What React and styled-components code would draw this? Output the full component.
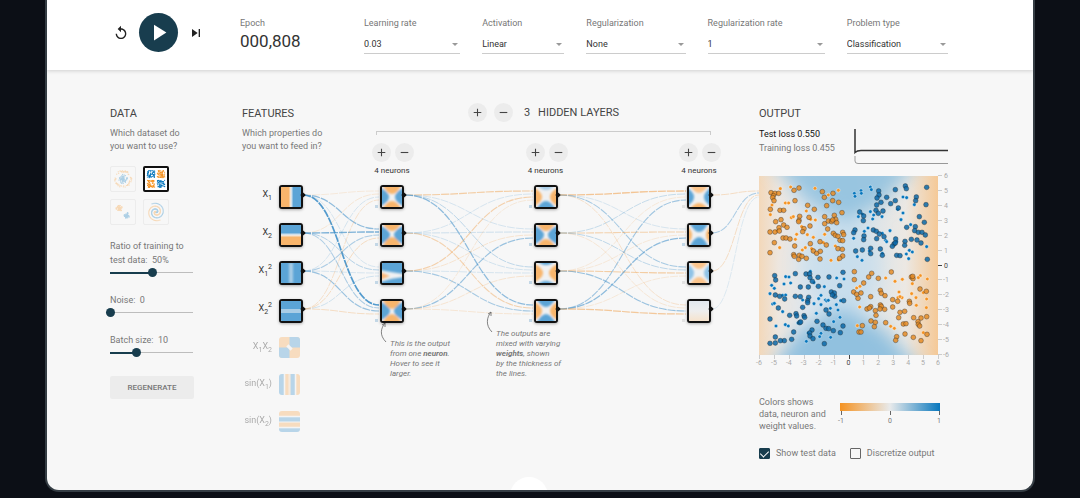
import React, { useState } from "react";
import styled, { createGlobalStyle } from "styled-components";
import { MdReplay, MdPlayArrow, MdSkipNext, MdAdd, MdRemove } from "react-icons/md";

const GlobalStyle = createGlobalStyle`
  * { box-sizing: border-box; }
  body {
    margin: 0;
    background: #0c0f16;
    color: #777;
    font: 9px/13px Roboto, "Liberation Sans", sans-serif;
  }
  button, select, input { font: inherit; color: inherit; margin: 0; }
`;

const BLUE = "#0877bd";
const ORANGE = "#f59322";

/* ---------- page shell ---------- */

const Frame = styled.div`
  margin: 0 45px 6px;
  border: 2px solid #353d44;
  border-top: 0;
  border-radius: 0 0 14px 14px;
  background: #f7f7f7;
  overflow: hidden;
`;

const Header = styled.header`
  display: flex;
  height: 70px;
  padding: 0 85px 0 63px;
  background: #fff;
  box-shadow: 0 1px 4px rgba(0, 0, 0, 0.16);
`;

const Main = styled.main`
  display: grid;
  grid-template-columns: 84px 1fr 190px;
  padding: 33px 84px 17px 63px;
`;

const Footer = styled.footer`
  display: flex;
  justify-content: center;
  height: 13px;
  padding: 0 85px 0 63px;
  overflow: hidden;
`;

const MoreButton = styled.button`
  width: 38px;
  height: 38px;
  border: 0;
  border-radius: 50%;
  background: #fff;
`;

/* ---------- header parts ---------- */

const Controls = styled.div`
  display: flex;
  align-items: center;
  flex: none;
  width: 130px;
  height: 65px;
  padding-left: 3px;
  gap: 10px;
`;

const IconButton = styled.button`
  display: grid;
  place-items: center;
  width: 16px;
  height: 16px;
  padding: 0;
  border: 0;
  background: none;
  color: #222;
  font-size: ${(p) => p.$size}px;
`;

const PlayButton = styled(IconButton)`
  width: 39px;
  height: 39px;
  border-radius: 50%;
  background: #183d4e;
  color: #fff;
`;

const Epoch = styled.div`
  flex: none;
  width: 124px;
  padding-top: 17px;
`;

const EpochValue = styled.output`
  display: block;
  font-size: 17px;
  line-height: 22px;
  color: #333;
`;

const Fields = styled.div`
  display: flex;
  flex: 1;
  gap: 22px;
  padding-top: 17px;
`;

const Field = styled.label`
  position: relative;
  display: block;
  flex: ${(p) => p.$grow} 1 0;
  min-width: 0;
  &::after {
    content: "";
    position: absolute;
    right: 2px;
    top: 26px;
    border: 3px solid transparent;
    border-top-color: #999;
    border-bottom: 0;
    pointer-events: none;
  }
`;

const Select = styled.select`
  display: block;
  width: 100%;
  height: 20px;
  margin-top: 4px;
  padding: 2px 0 0;
  border: 0;
  border-bottom: 1px solid #ccc;
  border-radius: 0;
  background: none;
  color: #333;
  appearance: none;
`;

function Dropdown({ label, options, grow }) {
  return (
    <Field $grow={grow}>
      {label}
      <Select defaultValue={options[0]}>
        {options.map((o) => (
          <option key={o}>{o}</option>
        ))}
      </Select>
    </Field>
  );
}

/* ---------- shared text ---------- */

const Title = styled.h2`
  margin: 0;
  font-size: 11px;
  line-height: 22px;
  font-weight: 400;
  color: #444;
`;

const Hint = styled.p`
  width: 84px;
  margin: 2px 0 0;
`;

/* ---------- data column ---------- */

const Datasets = styled.div`
  display: grid;
  grid-template-columns: 26px 26px;
  gap: 7px;
  margin: 13px 0 14px;
`;

const Dataset = styled.button`
  display: block;
  width: 26px;
  height: 26px;
  padding: 1px;
  border: ${(p) => (p.$active ? "2px solid #111" : "1px solid #ececec")};
  border-radius: 2px;
  background: ${(p) => (p.$active ? "#fff" : "none")};
  svg { display: block; width: 100%; height: 100%; opacity: ${(p) => (p.$active ? 1 : 0.3)}; }
`;

const SliderLabel = styled.label`
  display: block;
  height: ${(p) => (p.$tall ? 42 : 27)}px;
  margin-bottom: ${(p) => p.$after}px;
  line-height: 14px;
`;

const Range = styled.input`
  display: block;
  width: calc(100% + 8px);
  height: 9px;
  margin: 1px -4px 0;
  background: none;
  appearance: none;
  &::-webkit-slider-runnable-track {
    height: 9px;
    background:
      linear-gradient(#183d4e, #183d4e) 4px 4px / calc((100% - 9px) * ${(p) => p.$fill}) 2px no-repeat,
      linear-gradient(#bdbdbd, #bdbdbd) 4px 4px / calc(100% - 9px) 1px no-repeat;
  }
  &::-webkit-slider-thumb {
    width: 9px;
    height: 9px;
    border-radius: 50%;
    background: #183d4e;
    appearance: none;
  }
`;

const Regenerate = styled.button`
  display: block;
  width: 100%;
  height: 23px;
  padding: 0;
  border: 0;
  border-radius: 2px;
  background: #ececec;
  color: #777;
  font-size: 8px;
  font-weight: 500;
`;

function Slider({ label, unit = "", min, max, initial, tall, after }) {
  const [value, setValue] = useState(initial);
  return (
    <SliderLabel $tall={tall} $after={after}>
      {label}&nbsp; {value}{unit}
      <Range
        type="range"
        min={min}
        max={max}
        value={value}
        $fill={(value - min) / (max - min)}
        onChange={(e) => setValue(+e.target.value)}
      />
    </SliderLabel>
  );
}

const noise = (n) => {
  const v = Math.sin(n * 127.1 + 11.7) * 43758.5453;
  return v - Math.floor(v);
};
const range = (n) => Array.from({ length: n }, (_, i) => i);

const datasetDots = {
  circle: [
    ...range(80).map((i) => {
      const a = noise(i) * 6.28, r = noise(i + 90) * 5;
      return [12 + r * Math.cos(a), 12 + r * Math.sin(a), BLUE];
    }),
    ...range(60).map((i) => {
      const a = noise(i + 200) * 6.28, r = 7.5 + noise(i + 300) * 2;
      return [12 + r * Math.cos(a), 12 + r * Math.sin(a), ORANGE];
    }),
  ],
  xor: range(260).map((i) => {
    const x = noise(i + 5) * 9, y = noise(i + 400) * 9, q = i % 4;
    return [(q % 2 ? 13.5 : 1.5) + x, (q > 1 ? 13.5 : 1.5) + y, q === 0 || q === 3 ? BLUE : ORANGE];
  }),
  gauss: range(120).map((i) => {
    const a = noise(i + 7) * 6.28, r = noise(i + 60) * 3.5, o = i % 2;
    return [(o ? 8 : 16) + r * Math.cos(a), (o ? 8 : 16) + r * Math.sin(a), o ? ORANGE : BLUE];
  }),
  spiral: range(160).map((i) => {
    const t = (i >> 1) / 80, a = t * 10 + (i % 2 ? Math.PI : 0);
    return [12 + 10 * t * Math.sin(a), 12 + 10 * t * Math.cos(a), i % 2 ? ORANGE : BLUE];
  }),
};

function DatasetThumb({ kind, active }) {
  return (
    <Dataset $active={active} aria-label={kind} aria-pressed={!!active}>
      <svg viewBox="0 0 24 24">
        {datasetDots[kind].map(([x, y, c], i) => (
          <rect key={i} x={x - 0.6} y={y - 0.6} width="1.2" height="1.2" fill={c} />
        ))}
      </svg>
    </Dataset>
  );
}

/* ---------- network ---------- */

const Network = styled.section`
  position: relative;
  display: flex;
  padding: 0 38px 0 48px;
`;

const Links = styled.svg`
  position: absolute;
  left: 48px;
  top: 0;
  width: calc(100% - 48px);
  height: 340px;
  overflow: visible;
  pointer-events: none;
`;

const FeatureColumn = styled.div`
  flex: none;
  width: 82px;
  margin-right: 48px;
`;

const FeatureList = styled.div`
  position: relative;
  display: grid;
  gap: 14px;
  margin-top: 32px;
`;

const FeatureRow = styled.div`
  display: flex;
  justify-content: flex-end;
  gap: 7px;
  height: ${(p) => (p.$active ? 24 : 23)}px;
  padding-right: ${(p) => (p.$active ? 21 : 24)}px;
  opacity: ${(p) => (p.$active ? 1 : 0.4)};
`;

const FeatureName = styled.span`
  font-size: 9px;
  line-height: 18px;
  color: #333;
  white-space: nowrap;
  sub, sup { font-size: 7px; line-height: 0; }
`;

const Box = styled.button`
  position: relative;
  display: block;
  flex: none;
  width: ${(p) => (p.$plain ? 21 : 24)}px;
  height: ${(p) => (p.$plain ? 21 : 24)}px;
  padding: 0;
  border: ${(p) => (p.$plain ? "0" : "2px solid #111")};
  border-radius: 3px;
  background: #eee;
  box-shadow: ${(p) => (p.$plain ? "none" : "0 1px 3px rgba(0, 0, 0, 0.3)")};
  svg { display: block; width: 100%; height: 100%; border-radius: ${(p) => (p.$plain ? 3 : 1)}px; }
  &::after {
    content: "";
    display: ${(p) => (p.$plain ? "none" : "block")};
    position: absolute;
    right: -4px;
    top: 6px;
    width: 4px;
    height: 4px;
    border-radius: 1px;
    background: #111;
    transform: rotate(45deg);
  }
  &::before {
    content: "";
    display: ${(p) => (p.$bias ? "block" : "none")};
    position: absolute;
    left: -7px;
    bottom: -1px;
    width: 3px;
    height: 3px;
    background: ${(p) => p.$bias};
  }
`;

const Hidden = styled.div`
  position: relative;
  flex: 1;
`;

const HiddenHead = styled.div`
  display: flex;
  justify-content: center;
  align-items: center;
  gap: 7px;
  height: 19px;
  padding-right: 6px;
`;

const RoundButton = styled.button`
  display: grid;
  place-items: center;
  width: 19px;
  height: 19px;
  padding: 0;
  border: 0;
  border-radius: 50%;
  background: #ececec;
  color: #444;
  font-size: 13px;
`;

const HiddenTitle = styled(Title)`
  display: flex;
  gap: 8px;
  margin-left: 4px;
`;

const Bracket = styled.div`
  height: 4px;
  margin: 9px 10px 8px 4px;
  border: 1px solid #ccc;
  border-bottom: 0;
`;

const Layers = styled.div`
  display: flex;
  justify-content: space-between;
`;

const Layer = styled.div`
  width: 42px;
`;

const LayerButtons = styled.div`
  display: flex;
  justify-content: space-between;
`;

const NeuronCount = styled.div`
  margin: 3px 0 8px;
  padding-right: 2px;
  font-size: 8px;
  line-height: 12px;
  text-align: center;
  color: #333;
`;

const Neurons = styled.div`
  display: grid;
  gap: 14px;
  padding-left: 8px;
`;

const Callouts = styled.div`
  display: flex;
  gap: 44px;
  padding: 6px 0 0 18px;
  font-size: 8px;
  line-height: 10px;
  font-style: italic;
  white-space: nowrap;
  color: #777;
`;

const Callout = styled.p`
  width: ${(p) => p.$width}px;
  margin: 0;
  padding-top: ${(p) => p.$drop}px;
`;

const O = "#f8b56c";
const B = "#5ba4d6";
const W = "#f0f1f2";

const HEAT = {
  x1: <><rect width="20" height="20" fill="url(#gx)" /></>,
  x2: <><rect width="20" height="20" fill="url(#gy)" /></>,
  x1sq: <><rect width="20" height="20" fill={B} /><rect x="8" width="4" height="20" fill="#a9cde6" filter="url(#b1)" /></>,
  x2sq: <><rect width="20" height="20" fill={B} /><rect y="8" width="20" height="4" fill="#a9cde6" /></>,
  x1x2: (
    <>
      <rect width="20" height="20" fill={O} />
      <path d="M10 0H20V10H10zM0 10H10V20H0z" fill={B} />
      <path d="M8 8L12 12" stroke={W} strokeWidth="3" />
    </>
  ),
  sin1: <>{["#5ba4d6", W, O, "#f4d9bb", B, W, O].map((c, i) => <rect key={i} x={[0, 4.5, 6, 9, 11, 15, 16.5][i]} width="5" height="20" fill={c} />)}</>,
  sin2: <>{[O, W, B, W, O, W, B].map((c, i) => <rect key={i} y={[0, 4.5, 6, 10, 11, 15, 16.5][i]} width="20" height="5" fill={c} />)}</>,
  faded: <rect width="20" height="20" fill="url(#gf)" />,
  wedge: (
    <>
      <rect width="20" height="20" fill={B} />
      <path d="M-2 7Q8 9 22 11V14Q10 15 -2 19z" fill={W} filter="url(#b1)" />
      <path d="M-2 9L8 13L-2 17z" fill="#fbb87a" filter="url(#b1)" />
    </>
  ),
};

function saddle(side, top, bottom, [reach, up, down]) {
  return (
    <>
      <rect width="20" height="20" fill={W} />
      <g filter="url(#b1)">
        <path d={`M-3 0Q${reach * 2 + 3} 10 -3 20z`} fill={side} />
        <path d={`M23 0Q${17 - reach * 2} 10 23 20z`} fill={side} />
        <path d={`M0 -3Q10 ${up * 2 + 3} 20 -3z`} fill={top} />
        <path d={`M0 23Q10 ${17 - down * 2} 20 23z`} fill={bottom} />
      </g>
    </>
  );
}

const LAYERS = [
  [saddle(B, O, O, [7, 7, 6]), saddle(B, O, O, [8, 6, 8]), HEAT.wedge, saddle(B, O, O, [8, 8, 7])],
  [saddle(O, "#a8cde8", B, [6, 3, 6]), saddle(B, O, O, [8, 6, 6]), saddle(O, B, B, [7, 2, 2]), saddle(O, B, B, [6, 6, 7])],
  [saddle(B, "#fbc48c", O, [5, 6, 4]), saddle(O, B, B, [3, 7, 8]), saddle("#8fc2e6", "#fbc48c", "#fbc48c", [5, 6, 6]), HEAT.faded],
];

const FEATURES = [
  { name: <>X<sub>1</sub></>, heat: "x1", on: true },
  { name: <>X<sub>2</sub></>, heat: "x2", on: true },
  { name: <>X<sub>1</sub><sup>2</sup></>, heat: "x1sq", on: true },
  { name: <>X<sub>2</sub><sup>2</sup></>, heat: "x2sq", on: true },
  { name: <>X<sub>1</sub>X<sub>2</sub></>, heat: "x1x2" },
  { name: <>sin(X<sub>1</sub>)</>, heat: "sin1" },
  { name: <>sin(X<sub>2</sub>)</>, heat: "sin2" },
];

/* Signed link weights: rows are sources, columns are targets; positive is blue. */
const WEIGHTS = [
  {
    from: 61, to: 137,
    w: [[-0.08, 0.6, 0.08, 1.1], [-0.12, 0.75, 0.3, 0.35], [0.1, 0.35, 0.08, 0.5], [-0.2, -0.25, 0.12, -0.25]],
  },
  {
    from: 163, to: 291,
    w: [[-0.5, 0.1, 0.25, 0.6], [0.08, 0.15, 0.12, -0.4], [-0.45, -0.15, 0.08, 0.4], [-0.1, 0.5, -0.15, -0.12]],
  },
  {
    from: 317, to: 444,
    w: [[-0.65, 0.08, 0.4, -0.2], [0.2, -0.4, 0.25, -0.12], [-0.1, -0.1, -0.5, 0.5], [0.45, 0.6, -0.1, -0.6]],
  },
];

const rowY = (i) => 92 + 38 * i;

function curve(x0, y0, x1, y1) {
  const m = (x0 + x1) / 2;
  return `M${x0} ${y0}C${m} ${y0} ${m} ${y1} ${x1} ${y1}`;
}

function Link({ d, w }) {
  const a = Math.abs(w);
  return (
    <path
      d={d}
      fill="none"
      stroke={w > 0 ? "#3f8fc8" : "#f0a454"}
      strokeOpacity={0.18 + a * 0.65}
      strokeWidth={0.7 + a * 0.9}
      strokeDasharray="8 1"
    />
  );
}

function NetworkLinks() {
  return (
    <Links viewBox="0 0 517 340" preserveAspectRatio="none" aria-hidden="true">
      <defs>
        <filter id="b1" x="-30%" y="-30%" width="160%" height="160%"><feGaussianBlur stdDeviation="1" /></filter>
        <linearGradient id="gx"><stop offset=".38" stopColor={O} /><stop offset=".5" stopColor={W} /><stop offset=".62" stopColor={B} /></linearGradient>
        <linearGradient id="gy" x2="0" y2="1"><stop offset=".38" stopColor={B} /><stop offset=".5" stopColor={W} /><stop offset=".62" stopColor={O} /></linearGradient>
        <linearGradient id="gf" x2="0" y2="1"><stop offset="0" stopColor="#e2e8ee" /><stop offset=".5" stopColor="#eeeeee" /><stop offset="1" stopColor="#f6e3cd" /></linearGradient>
      </defs>
      {WEIGHTS.map(({ from, to, w }, s) =>
        w.map((row, i) =>
          row.map((v, j) => (
            <Link key={`${s}${i}${j}`} w={v} d={curve(from, rowY(i), to, rowY(j) - 4 + i * 3)} />
          ))
        )
      )}
      {[-0.25, 0.35, -0.25, 0.03].map((v, i) => (
        <Link key={i} w={v} d={curve(470, rowY(i), 517, 88 + i * 2)} />
      ))}
      <g fill="none" stroke="#666" strokeWidth=".8">
        <path d="M144 239C137 232 139 225 143 220M140 222L143 220L143 224" />
        <path d="M250 229C243 222 245 214 249 209M246 211L249 209L249 213" />
      </g>
    </Links>
  );
}

function Heat({ children }) {
  return <svg viewBox="0 0 20 20" preserveAspectRatio="none">{children}</svg>;
}

const PlusMinus = ({ what }) => (
  <>
    <RoundButton aria-label={`Add ${what}`}><MdAdd /></RoundButton>
    <RoundButton aria-label={`Remove ${what}`}><MdRemove /></RoundButton>
  </>
);

/* ---------- output ---------- */

const OutputHead = styled.div`
  display: flex;
  justify-content: space-between;
  height: 69px;
`;

const Losses = styled.div`
  margin-top: 2px;
  line-height: 14px;
  white-space: nowrap;
`;

const TestLoss = styled.div`
  color: #111;
`;

const LossChart = styled.svg`
  flex: none;
  width: 96px;
  height: 40px;
  margin-top: 24px;
`;

const Plot = styled.svg`
  display: block;
  width: 210px;
  height: 200px;
  margin: -2px 0 0 -9px;
  font-size: 7px;
`;

const Legend = styled.div`
  display: flex;
  gap: 10px;
  margin-top: 26px;
  line-height: 12px;
`;

const LegendText = styled.p`
  flex: none;
  width: 69px;
  margin: 0;
  white-space: nowrap;
`;

const Scale = styled.div`
  width: 104px;
  margin-top: 7px;
  font-size: 7px;
  line-height: 10px;
`;

const ScaleBar = styled.div`
  width: 100px;
  height: 8px;
  margin-left: 2px;
  background: linear-gradient(90deg, ${ORANGE}, #e8eaeb, ${BLUE});
`;

const ScaleTicks = styled.div`
  display: flex;
  justify-content: space-between;
`;

const Tick = styled.span`
  width: 6px;
  text-align: center;
  &::before {
    content: "";
    display: block;
    width: 1px;
    height: 4px;
    margin: 0 auto 1px;
    background: #666;
  }
`;

const Checks = styled.div`
  display: flex;
  gap: 14px;
  margin-top: 15px;
`;

const Check = styled.label`
  display: flex;
  align-items: center;
  gap: 6px;
  white-space: nowrap;
`;

const CheckBox = styled.input`
  display: grid;
  place-items: center;
  width: 11px;
  height: 11px;
  border: 1px solid #666;
  border-radius: 1px;
  appearance: none;
  &:checked { border-color: #183d4e; background: #183d4e; }
  &:checked::after {
    content: "";
    width: 4px;
    height: 7px;
    margin-top: -2px;
    border: solid #fff;
    border-width: 0 1px 1px 0;
    transform: rotate(45deg);
  }
`;

/* Samples in thirds of a pixel from the plot's corner. */
const parse = (s) => s.trim().split(/\s+/).map((p) => p.split(",").map((n) => n / 3));

const TEST_ORANGE = parse(`
63,68 75,70 86,70 70,77 68,83 72,92 61,118 90,121 101,121 77,155 93,149 60,186 75,186 87,173 88,183 101,165
111,172 73,218 60,248 99,204 108,204 120,207 132,61 147,54 135,92 173,106 193,118 149,139 147,151 177,142
146,155 180,168 162,176 158,185 217,65 223,82 249,70 230,107 248,92 266,97 276,128 253,136 224,140 224,161
235,153 245,155 257,148 260,158 248,150 233,177 250,190 256,196 264,199 278,187 281,194 270,211 278,212
229,225 210,215 181,221 134,228 131,254 133,259 148,256 146,268 156,259 169,265 190,243 200,250 211,244
210,267 264,236 277,238 278,258 269,265 313,305 313,329 341,339 356,321 365,310 385,325 424,306 484,321
489,326 488,319 311,366 320,373 324,385 333,369 362,380 391,361 394,370 405,377 428,389 443,394 478,394
479,400 510,357 529,364 362,410 351,417 358,414 391,405 394,409 390,417 404,418 428,411 376,422 378,436
363,453 376,457 373,470 407,458 327,486 333,486 337,467 446,443 450,427 464,424 460,462 468,461 491,443
513,444 530,440 504,455 505,463 509,468 531,493 465,492 440,500 437,511 490,502 513,512`);

const TRAIN_ORANGE = parse(`
91,56 122,51 195,55 265,61 235,75 66,105 106,99 116,99 61,134 124,143 130,140 169,123 196,150 182,148
155,170 80,183 172,194 190,202 140,193 89,233 136,208 157,240 166,233 224,193 220,218 256,228 265,270
243,271 185,236 320,354 330,349 407,324 457,328 487,341 511,317 505,323 532,327 447,366 444,383 456,383
450,380 485,371 520,368 498,383 530,387 499,406 529,413 329,411 322,467 422,469 433,475 520,488 435,334`);

const TEST_BLUE = parse(`
386,63 387,75 381,84 393,97 410,82 436,59 466,48 469,56 530,52 499,81 497,92 528,104 436,92 422,101 445,114
329,126 341,138 340,152 380,105 378,121 385,130 399,123 508,140 523,157 496,170 494,182 470,172 505,187
516,187 526,195 315,180 311,188 342,198 341,209 370,180 379,184 388,192 380,206 402,200 437,207 432,222
427,229 436,219 465,214 464,226 484,208 501,210 513,219 317,243 337,240 362,235 391,237 362,251 397,256
440,256 450,257 532,268 74,317 77,330 136,311 168,312 179,312 180,323 187,334 204,322 205,349 237,321
279,307 269,347 151,351 175,351 76,375 89,379 104,387 85,414 60,447 136,379 151,380 176,382 173,392 173,398
119,436 138,431 140,438 158,412 162,437 164,442 149,458 201,454 152,456 244,366 254,379 253,369 281,392
228,420 237,432 219,465 228,475 236,476 250,482 271,488 279,468 186,480 179,489 180,498 189,506 131,486
125,508 103,512 91,512 76,501 76,519 60,520 223,521 247,375`);

const TRAIN_BLUE = parse(`
313,70 315,79 333,62 334,70 361,51 364,59 459,81 470,83 493,104 459,129 443,118 453,149 325,140 337,132
361,125 368,147 371,135 396,140 354,174 397,190 311,205 407,211 420,182 482,164 343,184 410,215 322,260
336,271 397,250 478,241 487,246 469,252 476,266 530,230 358,243 440,215 107,320 117,321 65,346 102,342
60,371 73,355 122,339 181,304 223,350 192,338 260,324 282,327 98,376 107,375 213,376 206,386 192,401 226,390
230,393 235,391 272,392 213,404 259,404 68,402 73,400 158,390 98,425 106,464 115,468 78,468 144,459 213,490
209,500 169,514 174,489 242,502 270,442 251,455 264,420 241,415 199,430`);

function Dots({ points, fill, test }) {
  return points.map(([x, y], i) => (
    <circle
      key={i}
      cx={x}
      cy={y}
      r={test ? 2.4 : 1.8}
      fill={fill}
      fillOpacity={test ? 0.85 : 1}
      stroke={test ? "#222" : "#fff"}
      strokeOpacity={test ? 0.6 : 0.8}
      strokeWidth={test ? 0.6 : 0.5}
    />
  ));
}

function OutputPlot() {
  const axis = range(13).map((i) => i - 6);
  const step = 179 / 12;
  return (
    <Plot viewBox="0 0 210 200" role="img" aria-label="Network output">
      <defs>
        <linearGradient id="ox">
          <stop offset="0" stopColor="#f3d8ba" /><stop offset=".11" stopColor="#ede6df" /><stop offset=".25" stopColor="#dfe6ec" />
          <stop offset=".5" stopColor="#d5e3ed" /><stop offset=".82" stopColor="#ece8e3" /><stop offset="1" stopColor="#f5c997" />
        </linearGradient>
        <filter id="soft" x="-30%" y="-30%" width="160%" height="160%"><feGaussianBlur stdDeviation="9" /></filter>
        <clipPath id="area"><rect x="9" y="6" width="179" height="179" /></clipPath>
      </defs>
      <g clipPath="url(#area)">
        <rect x="9" y="6" width="179" height="179" fill="url(#ox)" />
        <g filter="url(#soft)">
          <path d="M10 -20H178L132 34L96 52L60 34z" fill="#8dbfde" fillOpacity=".85" />
          <path d="M8 215H186L134 160L92 136L50 160z" fill="#8dbfde" fillOpacity=".95" />
          <ellipse cx="92" cy="96" rx="40" ry="46" fill="#c0dbec" fillOpacity=".6" />
        </g>
      </g>
      <Dots points={TRAIN_BLUE} fill={BLUE} />
      <Dots points={TRAIN_ORANGE} fill={ORANGE} />
      <Dots points={TEST_BLUE} fill="#0b68a8" test />
      <Dots points={TEST_ORANGE} fill="#e58c26" test />
      {axis.map((v) => (
        <g key={v} fill={v ? "#aaa" : "#444"} stroke="none">
          <rect x={Math.round(9 + (v + 6) * step)} y="185" width="1" height="4" fill={v ? "#ccc" : "#444"} />
          <text x={9 + (v + 6) * step} y="195" textAnchor="middle">{v}</text>
          <rect x="188" y={Math.round(184 - (v + 6) * step)} width="4" height="1" fill={v ? "#ccc" : "#444"} />
          <text x={v < 0 ? 193 : 194} y={187 - (v + 6) * step}>{v}</text>
        </g>
      ))}
    </Plot>
  );
}

/* ---------- app ---------- */

export default function App() {
  return (
    <>
      <GlobalStyle />
      <Frame>
        <Header>
          <Controls>
            <IconButton $size={16} aria-label="Reset"><MdReplay /></IconButton>
            <PlayButton $size={27} aria-label="Run"><MdPlayArrow /></PlayButton>
            <IconButton $size={16} aria-label="Step"><MdSkipNext /></IconButton>
          </Controls>
          <Epoch>
            Epoch
            <EpochValue>000,808</EpochValue>
          </Epoch>
          <Fields>
            <Dropdown grow={96} label="Learning rate" options={["0.03", "0.1", "0.3"]} />
            <Dropdown grow={82} label="Activation" options={["Linear", "ReLU", "Tanh"]} />
            <Dropdown grow={99} label="Regularization" options={["None", "L1", "L2"]} />
            <Dropdown grow={117} label="Regularization rate" options={["1", "3", "10"]} />
            <Dropdown grow={101} label="Problem type" options={["Classification", "Regression"]} />
          </Fields>
        </Header>

        <Main>
          <section>
            <Title>DATA</Title>
            <Hint>Which dataset do you want to use?</Hint>
            <Datasets>
              <DatasetThumb kind="circle" />
              <DatasetThumb kind="xor" active />
              <DatasetThumb kind="gauss" />
              <DatasetThumb kind="spiral" />
            </Datasets>
            <Slider label={<>Ratio of training to<br />test data:</>} unit="%" min={0} max={100} initial={50} tall after={12} />
            <Slider label="Noise:" min={0} max={50} initial={0} after={13} />
            <Slider label="Batch size:" min={1} max={30} initial={10} after={16} />
            <Regenerate>REGENERATE</Regenerate>
          </section>

          <Network>
            <NetworkLinks />
            <FeatureColumn>
              <Title>FEATURES</Title>
              <Hint>Which properties do you want to feed in?</Hint>
              <FeatureList>
                {FEATURES.map(({ name, heat, on }) => (
                  <FeatureRow key={heat} $active={on}>
                    <FeatureName>{name}</FeatureName>
                    <Box $plain={!on} aria-label={heat} aria-pressed={!!on}><Heat>{HEAT[heat]}</Heat></Box>
                  </FeatureRow>
                ))}
              </FeatureList>
            </FeatureColumn>

            <Hidden>
              <HiddenHead>
                <PlusMinus what="layer" />
                <HiddenTitle><span>3</span><span>HIDDEN LAYERS</span></HiddenTitle>
              </HiddenHead>
              <Bracket />
              <Layers>
                {LAYERS.map((neurons, i) => (
                  <Layer key={i}>
                    <LayerButtons><PlusMinus what="neuron" /></LayerButtons>
                    <NeuronCount>4 neurons</NeuronCount>
                    <Neurons>
                      {neurons.map((n, j) => (
                        <Box key={j} $bias={i === 2 && j !== 1 ? "#e2e2e2" : "#c3d7e6"} aria-label={`Neuron ${j + 1}`}>
                          <Heat>{n}</Heat>
                        </Box>
                      ))}
                    </Neurons>
                  </Layer>
                ))}
              </Layers>
              <Callouts>
                <Callout $width={62} $drop={10}>
                  This is the output<br />from one <b>neuron</b>.<br />Hover to see it<br />larger.
                </Callout>
                <Callout $width={70} $drop={0}>
                  The outputs are<br />mixed with varying<br /><b>weights</b>, shown<br />by the thickness of<br />the lines.
                </Callout>
              </Callouts>
            </Hidden>
          </Network>

          <section>
            <OutputHead>
              <div>
                <Title>OUTPUT</Title>
                <Losses>
                  <TestLoss>Test loss 0.550</TestLoss>
                  Training loss 0.455
                </Losses>
              </div>
              <LossChart viewBox="0 0 96 40" fill="none" aria-label="Loss history">
                <path d="M2 2V25.500Q4 23.500 8 23.500H95" stroke="#333" strokeWidth="1.500" />
                <path d="M2 29V34Q2 36.500 5 36.500H95" stroke="#999" />
              </LossChart>
            </OutputHead>
            <OutputPlot />
            <Legend>
              <LegendText>Colors shows<br />data, neuron and<br />weight values.</LegendText>
              <Scale>
                <ScaleBar />
                <ScaleTicks><Tick>-1</Tick><Tick>0</Tick><Tick>1</Tick></ScaleTicks>
              </Scale>
            </Legend>
            <Checks>
              <Check><CheckBox type="checkbox" defaultChecked />Show test data</Check>
              <Check><CheckBox type="checkbox" />Discretize output</Check>
            </Checks>
          </section>
        </Main>
        <Footer><MoreButton aria-label="Scroll down" /></Footer>
      </Frame>
    </>
  );
}
